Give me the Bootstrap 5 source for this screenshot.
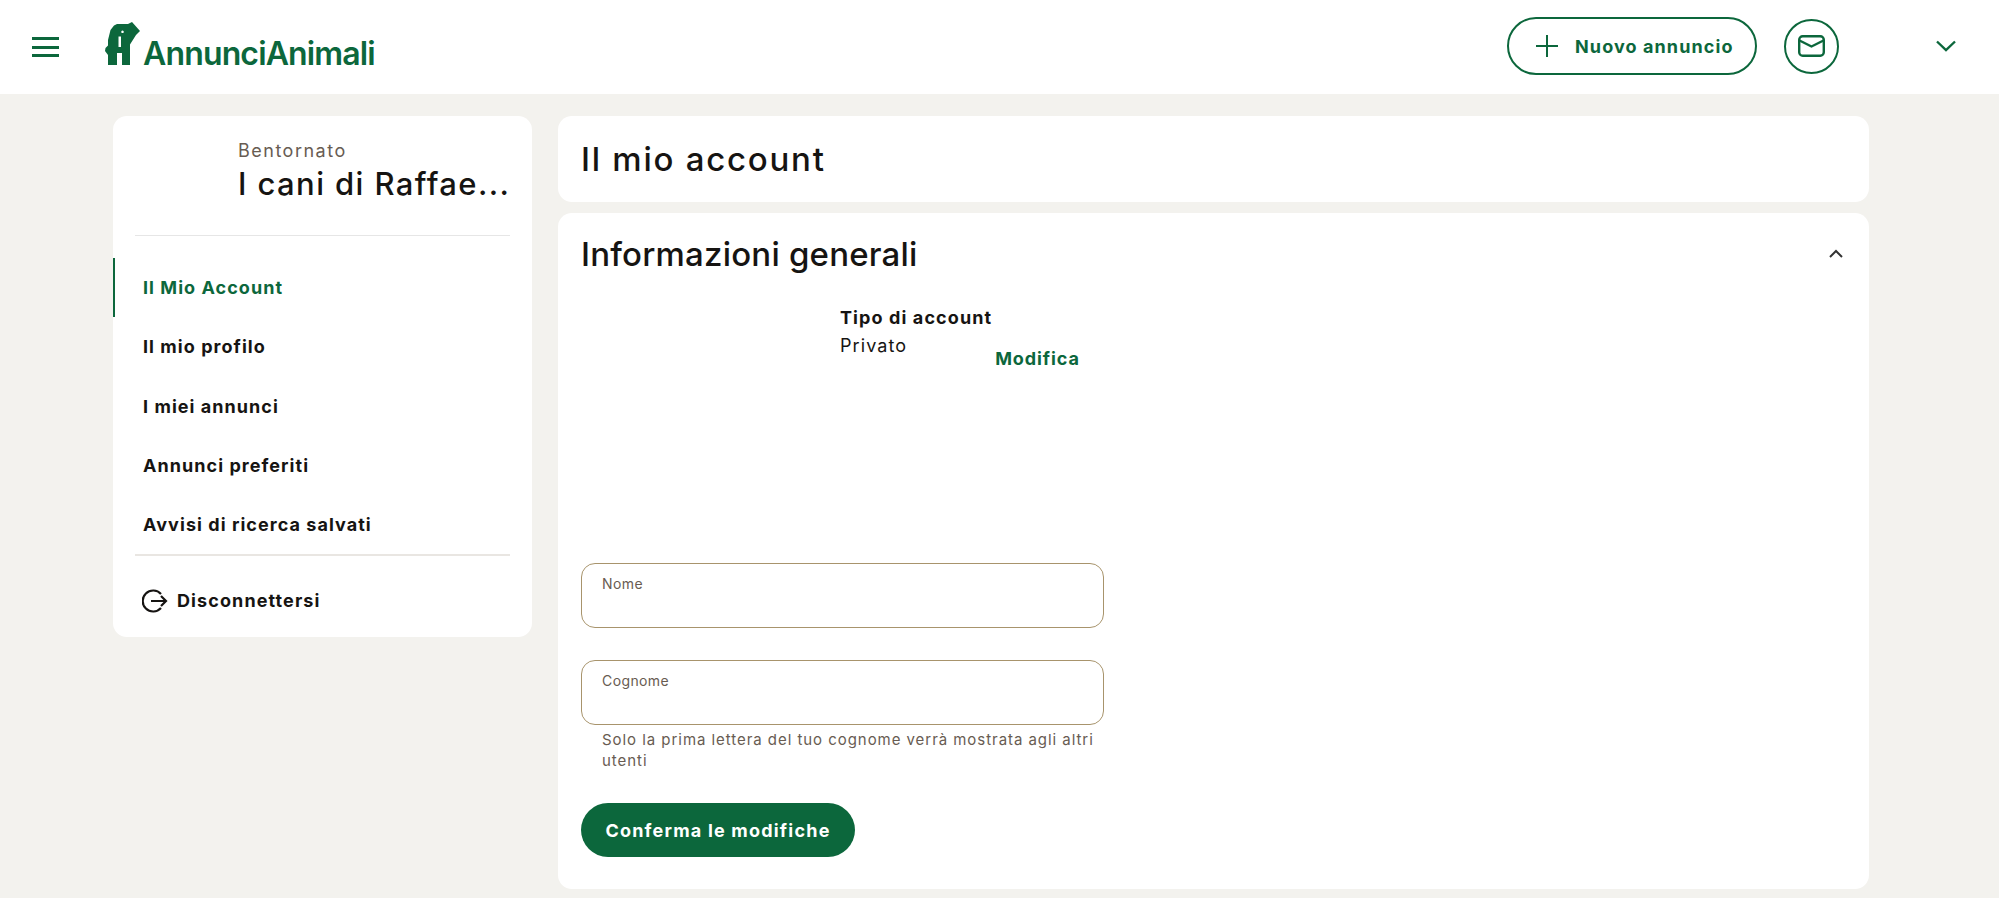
<!DOCTYPE html>
<html lang="it">
<head>
    <meta charset="UTF-8">
    <meta name="viewport" content="width=device-width, initial-scale=1.0">
    <title>Il mio account - AnnunciAnimali</title>
    <link href="https://cdn.jsdelivr.net/npm/bootstrap@5.3.0/dist/css/bootstrap.min.css" rel="stylesheet">
    <style>
        body {
            background-color: #f3f2ee;
            color: #161412;
            font-family: Inter, "Liberation Sans", sans-serif;
            font-size: 18px;
            letter-spacing: .9px;
            min-height: 898px;
        }
        .top-bar {
            height: 94px;
            padding: 0 43px 0 32px;
        }
        .burger {
            width: 27px;
            height: 20px;
            border-top: 3px solid #0c673c;
            border-bottom: 3px solid #0c673c;
            position: relative;
            margin-right: 46px;
        }
        .burger::after {
            content: "";
            position: absolute;
            left: 0;
            right: 0;
            top: 5.5px;
            height: 3px;
            background-color: #0c673c;
        }
        .brand {
            color: #0c673c;
            text-decoration: none;
            font-size: 32px;
            font-weight: 600;
            letter-spacing: -.85px;
            line-height: 1;
            gap: 3px;
            margin-bottom: 3px;
        }
        .brand svg {
            margin-bottom: 5px;
        }
        .top-actions {
            margin-bottom: 2px;
        }
        .btn-new {
            width: 250px;
            height: 58px;
            border: 2px solid #0c673c;
            border-radius: 29px;
            color: #0c673c;
            font-size: 18px;
            font-weight: 700;
            letter-spacing: 1.1px;
            gap: 17px;
            padding: 0 0 0 27px;
        }
        .btn-mail {
            width: 55px;
            height: 55px;
            border: 2px solid #0c673c;
            border-radius: 50%;
            margin-left: 27px;
            margin-right: 97px;
            padding: 0;
        }
        .page-wrap {
            padding: 22px 130px 9px 113px;
            gap: 26px;
        }
        .side-col {
            width: 419px;
            flex: none;
        }
        .white-box {
            background-color: #fff;
            border-radius: 14px;
        }
        .side-box {
            height: 521px;
            padding: 23px 0 0;
        }
        .greet {
            padding-left: 125px;
            height: 96px;
        }
        .greet-small {
            color: #685c52;
            font-size: 18px;
            line-height: 24px;
            letter-spacing: 1.5px;
        }
        .greet-name {
            font-size: 31px;
            font-weight: 500;
            line-height: 42px;
            letter-spacing: 1.4px;
            white-space: nowrap;
        }
        .side-line {
            margin: 0 22px;
            border: 0;
            height: 1px;
            background-color: #e6e6e6;
            opacity: 1;
        }
        .side-line.thick {
            height: 2px;
            background-color: #e9e6e2;
        }
        .side-menu {
            margin: 22px 0 0;
            padding: 0;
            list-style: none;
        }
        .side-menu a {
            display: flex;
            align-items: center;
            height: 59.3px;
            padding-left: 30px;
            color: #161412;
            font-size: 18px;
            font-weight: 700;
            letter-spacing: 1.05px;
            text-decoration: none;
        }
        .side-menu a.on {
            color: #0c673c;
            border-left: 2px solid #0c673c;
            padding-left: 28px;
        }
        .logout {
            color: #161412;
            font-size: 18px;
            font-weight: 700;
            letter-spacing: 1.1px;
            text-decoration: none;
            gap: 9px;
            padding: 31px 0 0 29px;
        }
        .title-box {
            height: 86px;
            padding: 0 23px;
            margin-bottom: 11px;
        }
        .big-title {
            font-size: 33px;
            font-weight: 500;
            margin: 0;
            line-height: 42px;
            letter-spacing: .2px;
        }
        .title-box .big-title {
            letter-spacing: 1.75px;
        }
        .info-box {
            height: 676px;
            padding: 20px 23px 0;
        }
        .fold-icon {
            margin: 0 3px 2px 0;
        }
        .acc-row {
            height: 268px;
            padding: 9px 0 0 259px;
            margin-top: 20px;
        }
        .acc-label {
            font-weight: 700;
            line-height: 28px;
            letter-spacing: 1.1px;
        }
        .acc-value {
            line-height: 28px;
            letter-spacing: 1.1px;
        }
        .acc-edit {
            color: #0c673c;
            font-weight: 700;
            text-decoration: none;
            margin-left: 3px;
            margin-top: 41px;
        }
        .form-col {
            width: 523px;
        }
        .field-wrap {
            position: relative;
            margin-bottom: 32px;
        }
        .field-wrap .form-control {
            height: 65px;
            border: 1px solid #a8946c;
            border-radius: 14px;
            padding: 26px 20px 4px;
            font-size: 16px;
        }
        .field-wrap label {
            position: absolute;
            left: 21px;
            top: 11px;
            color: #685c52;
            font-size: 14px;
            line-height: 20px;
            letter-spacing: .4px;
        }
        .field-note {
            color: #685c52;
            font-size: 15px;
            line-height: 21px;
            letter-spacing: .95px;
            padding: 4px 0 0 21px;
            margin: -32px 0 32px;
        }
        .btn-save {
            width: 274px;
            height: 54px;
            border-radius: 27px;
            background-color: #0c673c;
            border: 0;
            color: #fff;
            font-size: 18px;
            font-weight: 700;
            letter-spacing: 1.2px;
            padding: 0;
        }
    </style>
</head>
<body>
    <header class="top-bar bg-white d-flex align-items-center">
        <div class="burger"></div>
        <a class="brand d-flex align-items-end" href="#">
            <svg width="35" height="43" viewBox="0 0 35 43">
                <path fill="#0c673c" fill-rule="evenodd" d="M9 3.5 12 2h11l4-2 8 9-4 4-6 9.500V43H17V31h-5v12H3V33L0 29l.5-3L3 23.500V18l2.500-10zM17.500 8.500a1.300 1.300 0 1 0 .01 0zM13.500 14.500V25h2.500V14.500z"/>
            </svg>
            <span>AnnunciAnimali</span>
        </a>
        <div class="top-actions ms-auto d-flex align-items-center">
            <button class="btn btn-new d-flex align-items-center" type="button">
                <svg width="22" height="22" viewBox="0 0 22 22"><path d="M11 0v22M0 11h22" stroke="#0c673c" stroke-width="2" fill="none"/></svg>
                Nuovo annuncio
            </button>
            <button class="btn btn-mail d-flex align-items-center justify-content-center" type="button" aria-label="Messaggi">
                <svg width="27" height="22" viewBox="0 0 27 22" fill="none" stroke="#0c673c" stroke-width="2.400">
                    <rect x="1.200" y="1.200" width="24.600" height="19.600" rx="3.500"/>
                    <path d="M1.500 5.500l12 6 12-6"/>
                </svg>
            </button>
            <svg width="20" height="12" viewBox="0 0 20 12" fill="none" stroke="#0c673c" stroke-width="2.400"><path d="M1 1.500l9 8.500 9-8.500"/></svg>
        </div>
    </header>

    <div class="page-wrap d-flex align-items-start">
        <aside class="side-col white-box side-box">
            <div class="greet">
                <div class="greet-small">Bentornato</div>
                <div class="greet-name">I cani di Raffae...</div>
            </div>
            <hr class="side-line">
            <ul class="side-menu">
                <li><a class="on" href="#">Il Mio Account</a></li>
                <li><a href="#">Il mio profilo</a></li>
                <li><a href="#">I miei annunci</a></li>
                <li><a href="#">Annunci preferiti</a></li>
                <li><a href="#">Avvisi di ricerca salvati</a></li>
            </ul>
            <hr class="side-line thick">
            <a class="logout d-flex align-items-center" href="#">
                <svg width="26" height="24" viewBox="0 0 26 24" fill="none" stroke="#161412" stroke-width="2.200">
                    <path d="M19 5a10.500 10.500 0 1 0 0 14"/>
                    <path d="M9 12h15M19 7l5 5-5 5"/>
                </svg>
                Disconnettersi
            </a>
        </aside>

        <main class="flex-grow-1">
            <div class="white-box title-box d-flex align-items-center">
                <h1 class="big-title">Il mio account</h1>
            </div>
            <section class="white-box info-box">
                <div class="d-flex align-items-center justify-content-between">
                    <h2 class="big-title">Informazioni generali</h2>
                    <svg class="fold-icon" width="14" height="9" viewBox="0 0 14 9" fill="none" stroke="#333" stroke-width="2"><path d="M1 8l6-6 6 6"/></svg>
                </div>
                <div class="acc-row d-flex align-items-start">
                    <div>
                        <div class="acc-label">Tipo di account</div>
                        <div class="acc-value">Privato</div>
                    </div>
                    <a class="acc-edit" href="#">Modifica</a>
                </div>
                <form class="form-col">
                    <div class="field-wrap">
                        <input class="form-control" id="nome" type="text">
                        <label for="nome">Nome</label>
                    </div>
                    <div class="field-wrap">
                        <input class="form-control" id="cognome" type="text">
                        <label for="cognome">Cognome</label>
                    </div>
                    <p class="field-note">Solo la prima lettera del tuo cognome verrà mostrata agli altri utenti</p>
                    <button class="btn btn-save" type="button">Conferma le modifiche</button>
                </form>
            </section>
        </main>
    </div>

    <script src="https://cdn.jsdelivr.net/npm/bootstrap@5.3.0/dist/js/bootstrap.bundle.min.js"></script>
</body>
</html>
